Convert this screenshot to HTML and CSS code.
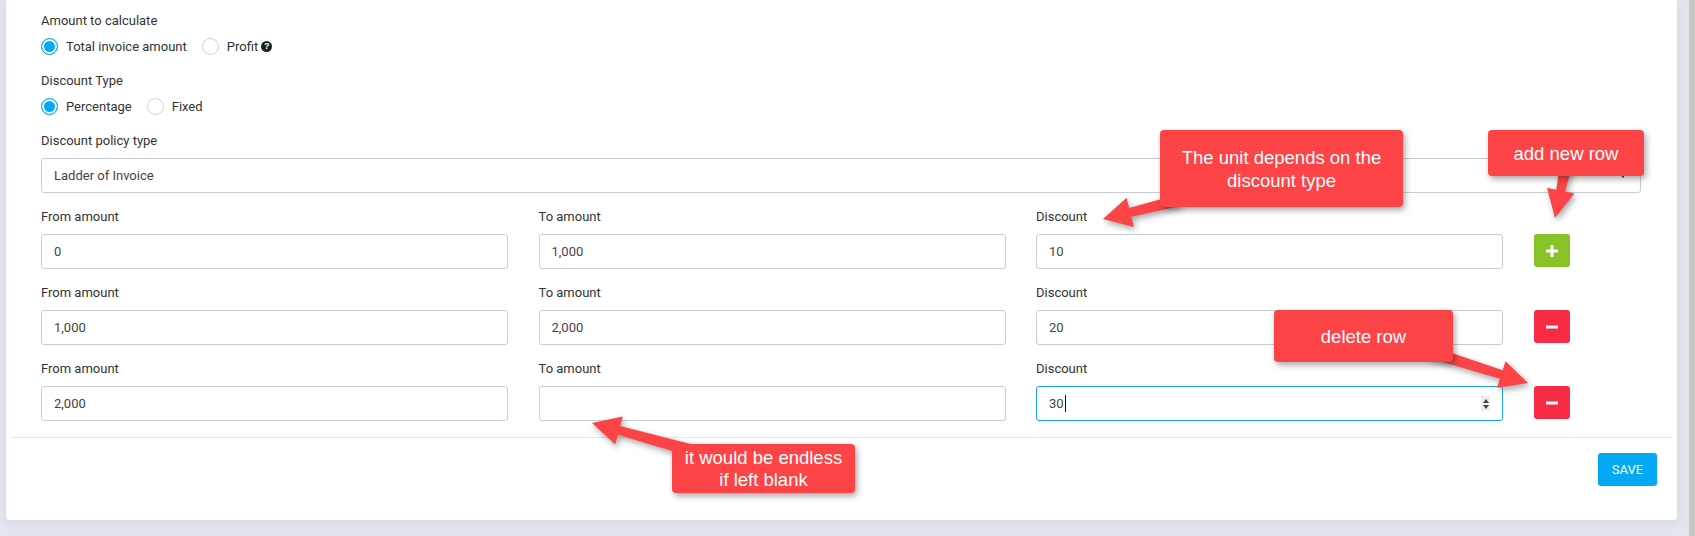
FILE: index.html
```html
<!DOCTYPE html>
<html lang="en">
<head>
<meta charset="utf-8">
<title>Discount policy</title>
<link rel="stylesheet" href="styles.css">
</head>
<body>
<div class="card">
  <div class="form">
    <div class="group">
      <div class="label">Amount to calculate</div>
      <div class="radios">
        <span class="radio checked"></span><span class="opt">Total invoice amount</span>
        <span class="radio"></span><span class="opt">Profit</span><span class="help">?</span>
      </div>
    </div>
    <div class="group">
      <div class="label">Discount Type</div>
      <div class="radios">
        <span class="radio checked"></span><span class="opt">Percentage</span>
        <span class="radio"></span><span class="opt">Fixed</span>
      </div>
    </div>
    <div class="group group-select">
      <div class="label">Discount policy type</div>
      <div class="select">Ladder of Invoice<span class="caret"></span></div>
    </div>

    <div class="ladder-row">
      <div class="field"><div class="label">From amount</div><div class="input">0</div></div>
      <div class="field"><div class="label">To amount</div><div class="input">1,000</div></div>
      <div class="field"><div class="label">Discount</div><div class="input">10</div></div>
      <div class="action"><span class="btn-icon add"><svg width="12" height="12" viewBox="0 0 12 12"><rect x="4.5" y="0" width="3" height="12" fill="#fff"/><rect x="0" y="4.5" width="12" height="3" fill="#fff"/></svg></span></div>
    </div>
    <div class="ladder-row">
      <div class="field"><div class="label">From amount</div><div class="input">1,000</div></div>
      <div class="field"><div class="label">To amount</div><div class="input">2,000</div></div>
      <div class="field"><div class="label">Discount</div><div class="input">20</div></div>
      <div class="action"><span class="btn-icon remove"><svg width="12" height="12" viewBox="0 0 12 12"><rect x="0" y="4.5" width="12" height="3" fill="#fff"/></svg></span></div>
    </div>
    <div class="ladder-row last">
      <div class="field"><div class="label">From amount</div><div class="input">2,000</div></div>
      <div class="field"><div class="label">To amount</div><div class="input"></div></div>
      <div class="field"><div class="label">Discount</div><div class="input focus">30<span class="text-caret"></span><span class="spinner"><span class="up"></span><span class="down"></span></span></div></div>
      <div class="action"><span class="btn-icon remove"><svg width="12" height="12" viewBox="0 0 12 12"><rect x="0" y="4.5" width="12" height="3" fill="#fff"/></svg></span></div>
    </div>
  </div>
  <div class="footer">
    <button class="save">SAVE</button>
  </div>
</div>
<div class="scrollbar"></div>

<svg class="arrows" width="1695" height="536" viewBox="0 0 1695 536">
  <polygon points="1178.6,194.2 1129.1,207.9 1126.6,197.7 1103,219 1133.8,226.9 1131.3,216.7 1181.4,205.8"/>
  <polygon points="1560.1,163.8 1556.3,189.7 1547,187.8 1555,218 1574.4,193.4 1565.1,191.5 1571.9,166.2"/>
  <polygon points="1431.8,346.3 1502.7,370.2 1505.5,361.2 1528,383 1497.1,387.8 1499.9,378.8 1428.2,357.7"/>
  <polygon points="691.6,444.2 620.2,426.1 622.8,416.4 592,423 615.2,444.4 617.8,434.7 688.4,455.8"/>
</svg>

<div class="callout c-unit">The unit depends on the<br>discount type</div>
<div class="callout c-add">add new row</div>
<div class="callout c-delete">delete row</div>
<div class="callout c-endless">it would be endless<br>if left blank</div>
</body>
</html>
```

FILE: styles.css
```css
html, body {
  margin: 0;
  padding: 0;
}

body {
  position: relative;
  width: 1695px;
  height: 536px;
  overflow: hidden;
  background: #e2e5ed;
  display: flex;
  font-family: Roboto, "Liberation Sans", Arial, sans-serif;
  color: #333;
}

.card {
  margin-left: 6px;
  width: 1671px;
  height: 520px;
  box-sizing: border-box;
  padding: 0 5px;
  background: #fff;
  border-radius: 0 0 4px 4px;
  box-shadow: 0 3px 8px rgba(40, 50, 80, 0.07);
  display: flex;
  flex-direction: column;
}

.scrollbar {
  margin-left: auto;
  width: 6px;
  background: #c6c6c6;
}

.form {
  padding: 13px 31px 16px 30px;
  border-bottom: 1px solid #e4e6ea;
}

.label {
  font-size: 13px;
  line-height: 16px;
  color: #333;
  margin-bottom: 7px;
}

.group {
  margin-bottom: 17px;
}

.group-select .label {
  margin-bottom: 9px;
}

.group-select {
  margin-bottom: 16px;
}

.radios {
  display: flex;
  align-items: center;
  height: 20px;
  font-size: 13px;
  color: #333;
}

.radio {
  width: 15px;
  height: 15px;
  border: 1px solid #cbd1db;
  border-radius: 50%;
  background: #fff;
  margin-right: 8px;
  flex: none;
}

.radio.checked {
  border-color: #03a9f4;
  background: #03a9f4;
  box-shadow: inset 0 0 0 2px #fff;
}

.opt {
  margin-right: 15px;
}

.opt:last-child {
  margin-right: 0;
}

.help {
  width: 11px;
  height: 11px;
  border-radius: 50%;
  background: #1f1f1f;
  color: #fff;
  font-size: 9px;
  font-weight: bold;
  line-height: 11px;
  text-align: center;
  margin-left: -12px;
  font-family: "Liberation Sans", Arial, sans-serif;
}

.select,
.input {
  height: 35px;
  box-sizing: border-box;
  border: 1px solid #c4cedb;
  border-radius: 3px;
  padding: 0 12px;
  display: flex;
  align-items: center;
  font-size: 13px;
  color: #444;
  background: #fff;
}

.select {
  position: relative;
}

.caret {
  margin-left: auto;
  margin-right: 2px;
  width: 0;
  height: 0;
  border-left: 3px solid transparent;
  border-right: 3px solid transparent;
  border-top: 4px solid #333;
}

.ladder-row {
  display: grid;
  grid-template-columns: repeat(3, 467px) 36px;
  column-gap: 30.5px;
  margin-bottom: 16px;
}

.ladder-row.last {
  margin-bottom: 0;
}

.field .label {
  margin-bottom: 9px;
}

.action {
  padding-top: 25px;
}

.btn-icon {
  width: 36px;
  height: 33px;
  border-radius: 3px;
  display: flex;
  align-items: center;
  justify-content: center;
}

.btn-icon.add {
  background: #86c228;
}

.btn-icon.remove {
  background: #f72b43;
}

.input.focus {
  border-color: #1aa6ea;
}

.text-caret {
  width: 1px;
  height: 17px;
  background: #111;
  margin-left: 1px;
}

.spinner {
  margin-left: auto;
  margin-right: 0;
  width: 9px;
  height: 15px;
  background: #ededed;
  display: flex;
  flex-direction: column;
  align-items: center;
  justify-content: center;
  gap: 2px;
}

.spinner .up {
  width: 0;
  height: 0;
  border-left: 3.5px solid transparent;
  border-right: 3.5px solid transparent;
  border-bottom: 4px solid #444;
}

.spinner .down {
  width: 0;
  height: 0;
  border-left: 3.5px solid transparent;
  border-right: 3.5px solid transparent;
  border-top: 4px solid #444;
}

.footer {
  display: flex;
  justify-content: flex-end;
  padding: 15px 15px 0 0;
}

.save {
  width: 59px;
  height: 33px;
  border: none;
  border-radius: 3px;
  background: #03a9f4;
  color: #fff;
  font-family: Roboto, "Liberation Sans", Arial, sans-serif;
  font-size: 13px;
  padding: 0;
}

/* annotations */
.arrows {
  position: absolute;
  left: 0;
  top: 0;
  pointer-events: none;
  fill: #fc4447;
  filter: drop-shadow(2px 3px 3px rgba(0, 0, 0, 0.35));
}

.callout {
  position: absolute;
  box-sizing: border-box;
  display: flex;
  align-items: center;
  justify-content: center;
  text-align: center;
  background: #fc4447;
  color: #fff;
  border-radius: 4px;
  font-family: "Liberation Sans", Arial, sans-serif;
  font-size: 18.5px;
  line-height: 23px;
  box-shadow: 2px 3px 6px rgba(0, 0, 0, 0.35);
}

.c-unit {
  left: 1160px;
  top: 130px;
  width: 243px;
  height: 77px;
}

.c-add {
  left: 1488px;
  top: 130px;
  width: 156px;
  height: 46px;
}

.c-delete {
  left: 1274px;
  top: 310px;
  width: 179px;
  height: 52px;
}

.c-endless {
  left: 672px;
  top: 444px;
  width: 183px;
  height: 49px;
  line-height: 22px;
}
```
